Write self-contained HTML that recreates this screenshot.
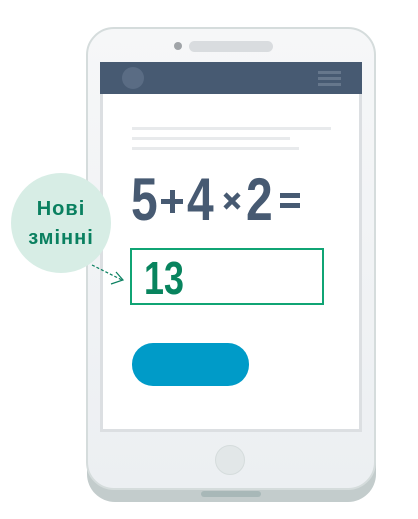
<!DOCTYPE html>
<html><head><meta charset="utf-8"><style>
body{margin:0;width:418px;height:519px;background:#fff;position:relative;overflow:hidden;font-family:"Liberation Sans",sans-serif}
div{position:absolute;box-sizing:border-box}
.g{top:170px;font-size:60px;font-weight:bold;color:#475a72;line-height:60px;transform:scaleX(0.8);transform-origin:left;white-space:nowrap}
.o{font-weight:bold;color:#475a72;white-space:nowrap}
</style></head><body>
<div style="left:87px;top:38px;width:289px;height:464px;border-radius:28px;background:#c3cccc"></div>
<div style="left:86px;top:27px;width:290px;height:463px;border-radius:28px;background:linear-gradient(#f6f7f8,#eceff2);border:2px solid #d5dcdc"></div>
<div style="left:201px;top:491px;width:60px;height:6px;border-radius:3px;background:#a8b8b8"></div>
<div style="left:174px;top:42px;width:8px;height:8px;border-radius:50%;background:#a0a4a8"></div>
<div style="left:189px;top:41px;width:84px;height:11px;border-radius:6px;background:#d9dcdf"></div>
<div style="left:100px;top:62px;width:262px;height:370px;background:#fff;border:3px solid #dcdfe2;border-top:none"></div>
<div style="left:100px;top:62px;width:262px;height:32px;background:#475a72"></div>
<div style="left:122px;top:67px;width:22px;height:22px;border-radius:50%;background:#5a6c84"></div>
<div style="left:318px;top:71px;width:23px;height:3px;background:#66778c"></div>
<div style="left:318px;top:77px;width:23px;height:3px;background:#66778c"></div>
<div style="left:318px;top:83px;width:23px;height:3px;background:#66778c"></div>
<div style="left:132px;top:127px;width:199px;height:3px;background:#e8eaec"></div>
<div style="left:132px;top:137px;width:158px;height:3px;background:#e8eaec"></div>
<div style="left:132px;top:147px;width:167px;height:3px;background:#e8eaec"></div>
<div class="g" style="left:131px">5</div>
<div class="g" style="left:187px">4</div>
<div class="g" style="left:246px">2</div>
<div style="left:161px;top:199px;width:22px;height:5px;background:#475a72"></div>
<div style="left:169.5px;top:190px;width:5px;height:23px;background:#475a72"></div>
<svg style="position:absolute;left:222px;top:191px" width="20" height="20"><path d="M3 3L17 17M17 3L3 17" stroke="#475a72" stroke-width="4.5"/></svg>
<div style="left:280px;top:193px;width:20px;height:5px;background:#475a72"></div>
<div style="left:280px;top:203px;width:20px;height:5px;background:#475a72"></div>
<div style="left:130px;top:248px;width:194px;height:57px;border:2px solid #10a474"></div>
<div style="left:144px;top:254px;font-size:46px;font-weight:bold;color:#08845e;line-height:48px;transform:scaleX(0.78);transform-origin:left">13</div>
<div style="left:132px;top:343px;width:117px;height:43px;border-radius:21px;background:#009bc8"></div>
<div style="left:215px;top:445px;width:30px;height:30px;border-radius:50%;background:#e2e7e8;border:1px solid #d5dcdc"></div>
<div style="left:11px;top:173px;width:100px;height:100px;border-radius:50%;background:#d7ede5"></div>
<div style="left:11px;top:195px;width:100px;text-align:center;font-size:20px;font-weight:bold;color:#0a8060;line-height:29px;letter-spacing:1px">Нові<br>змінні</div>
<svg style="position:absolute;left:85px;top:255px" width="45" height="35"><path d="M7 10 L37 25" stroke="#0a8060" stroke-width="1.2" stroke-dasharray="3 2" fill="none"/><path d="M31 17 L38 25 L26 29" stroke="#0a8060" stroke-width="1.2" fill="none"/></svg>
</body></html>
